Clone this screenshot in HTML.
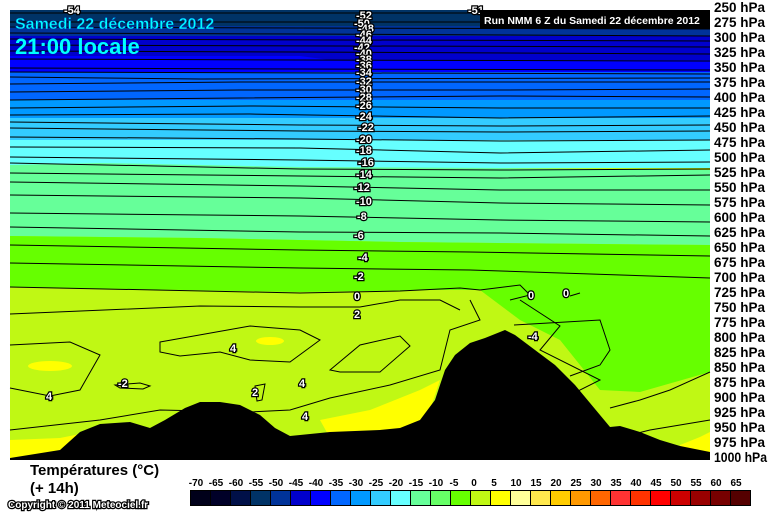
<!DOCTYPE html>
<html><head><meta charset="utf-8"><style>
body{margin:0;width:768px;height:512px;background:#fff;overflow:hidden;font-family:"Liberation Sans",sans-serif}
svg{position:absolute;left:0;top:0}
.lb{font:bold 11px "Liberation Sans",sans-serif;fill:#fff;stroke:#000;stroke-width:2.5px;paint-order:stroke}
</style></head><body>
<svg width="768" height="512" viewBox="0 0 768 512">
<rect x="10" y="10" width="700" height="450" fill="#c0f814"/>
<rect x="10" y="10" width="700" height="16" fill="#003366"/>
<rect x="10" y="26" width="700" height="10" fill="#003399"/>
<path d="M10 36H710V72H10Z" fill="#0000cc"/>
<path d="M10 56H300L330 60H710V73H10Z" fill="#0000ff"/>
<path d="M10 72H710V101H10Z" fill="#0066ff"/>
<path d="M10 100H710V119H10Z" fill="#0099ff"/>
<path d="M10 118H710V141H10Z" fill="#33ccff"/>
<path d="M10 140H710V168H10Z" fill="#66ffff"/>
<path d="M10 165L100 163L300 167L500 168L710 170V245L600 244L400 242L200 238L10 236Z" fill="#66ff99"/>
<path d="M10 236L200 238L400 242L600 244L710 245V372L640 392L600 390L560 340L520 320L480 290L430 290L300 292L10 287Z" fill="#66ff00"/>
<path d="M10 287L150 292L300 296L420 296L470 292L480 310L500 320L480 350L460 360L420 340L400 300Z" fill="#c0f814"/>
<path d="M10 440L60 438L90 432L80 450L60 458H10Z" fill="#ffff00"/>
<path d="M320 420L370 410L420 390L440 380L430 410L410 430L330 438Z" fill="#ffff00"/>
<path d="M680 445L700 437L710 432V455H680Z" fill="#ffff00"/>
<ellipse cx="270" cy="341" rx="14" ry="4" fill="#ffff00"/>
<ellipse cx="50" cy="366" rx="22" ry="5" fill="#ffff00"/>
<g fill="none" stroke="#000" stroke-width="1">
<path d="M10 13H710"/><path d="M10 22H710"/><path d="M10 27L300 28L710 29"/>
<path d="M10 33L300 34L710 36"/><path d="M10 39L710 41"/><path d="M10 45L710 47"/>
<path d="M10 51L300 52L710 54"/><path d="M10 59L300 60L710 61"/><path d="M10 68L300 69L710 70"/>
<path d="M10 72L710 74"/><path d="M10 77L200 79L710 78"/><path d="M10 84L240 82L710 82"/>
<path d="M10 92L240 90L500 90L710 89"/><path d="M10 100L240 98L500 96L710 97"/><path d="M10 108L250 106L500 108L710 108"/>
<path d="M10 115L250 114L500 118L710 116"/><path d="M10 122L300 125L500 126L710 125"/><path d="M10 128L300 131L500 132L710 131"/>
<path d="M10 137L300 139L500 141L710 140"/><path d="M10 147L300 148L500 153L710 150"/><path d="M10 157L300 160L500 163L710 162"/>
<path d="M10 163L300 169L500 170L710 169"/><path d="M10 173L300 176L500 178L710 175"/><path d="M10 182L300 186L500 190L710 190"/>
<path d="M10 195L300 198L500 203L710 205"/><path d="M10 213L300 216L500 220L710 222"/><path d="M10 227L300 232L500 233L710 236"/>
<path d="M10 245L300 250L470 252L710 256"/><path d="M10 263L300 268L470 270L710 278"/><path d="M10 287L300 293L400 291L460 288L480 290L520 285L530 295L510 300"/>
<path d="M10 314L200 306L300 307L360 307L400 300L440 300L460 310"/>
<path d="M10 345L70 342L100 355L80 390L50 396L10 388"/>
<path d="M160 342L250 326L300 330L320 340L290 362L250 360L220 352L180 356L160 352Z"/>
<path d="M330 370L360 345L400 336L410 346L380 372L340 372Z"/>
<path d="M115 385L140 383L150 386L143 389L120 388Z"/>
<path d="M255 386L265 384L262 400L257 401Z"/>
<path d="M10 430L100 420L160 410L250 412L290 410L330 398L390 385L440 370L450 330L480 320L470 300"/>
<path d="M520 300L560 326L540 350L600 380L560 400L590 405"/>
<path d="M514 325L600 320L610 350L600 365L570 376"/>
<path d="M610 440L650 430L710 420"/><path d="M610 408L640 400L670 390L710 372"/>
<path d="M570 296L580 293"/>
</g>
<path d="M10 460V458L60 450L80 432L100 424L130 422L150 428L165 420L185 408L200 402L220 402L240 405L260 415L275 428L290 436L330 432L380 430L400 428L420 420L435 400L445 370L455 355L470 343L485 338L505 330L515 335L535 350L555 365L575 385L590 403L610 427L620 426L640 432L660 440L680 446L710 452V460Z" fill="#000"/>
<g class="lb">
<text x="64" y="14">-54</text><text x="468" y="14">-51</text>
<text x="356" y="19">-52</text><text x="354" y="27">-50</text><text x="358" y="32">-48</text><text x="356" y="38">-46</text><text x="356" y="44">-44</text><text x="354" y="51">-42</text><text x="356" y="57">-40</text><text x="356" y="63">-38</text><text x="356" y="69">-36</text><text x="356" y="76">-34</text><text x="356" y="85">-32</text><text x="356" y="93">-30</text><text x="356" y="101">-28</text><text x="356" y="109">-26</text><text x="356" y="120">-24</text><text x="358" y="131">-22</text><text x="356" y="143">-20</text><text x="356" y="154">-18</text><text x="358" y="166">-16</text><text x="356" y="178">-14</text><text x="354" y="191">-12</text><text x="356" y="205">-10</text><text x="357" y="220">-8</text><text x="354" y="239">-6</text><text x="358" y="261">-4</text><text x="354" y="280">-2</text><text x="354" y="300">0</text><text x="354" y="318">2</text>
<text x="230" y="352">4</text><text x="46" y="400">4</text><text x="118" y="387">-2</text><text x="252" y="396">2</text><text x="299" y="387">4</text><text x="302" y="420">4</text>
<text x="528" y="299">0</text><text x="563" y="297">0</text><text x="528" y="340">-4</text>
</g>
<text x="15" y="29" font-family="Liberation Sans" font-size="16" font-weight="bold" fill="#00ffff" stroke="#0033aa" stroke-width="0.5">Samedi 22 décembre 2012</text>
<text x="15" y="54" font-family="Liberation Sans" font-size="22" font-weight="bold" fill="#00ffff">21:00 locale</text>
<rect x="480" y="10" width="230" height="19" fill="#000"/>
<text x="484" y="24" font-family="Liberation Sans" font-size="10.5" font-weight="bold" fill="#fff">Run NMM 6 Z du Samedi 22 décembre 2012</text>
<g font-family="Liberation Sans" font-size="14" font-weight="bold" fill="#000" lengthAdjust="spacingAndGlyphs">
<text x="714" y="12" textLength="51" lengthAdjust="spacingAndGlyphs">250 hPa</text><text x="714" y="27" textLength="51" lengthAdjust="spacingAndGlyphs">275 hPa</text><text x="714" y="42" textLength="51" lengthAdjust="spacingAndGlyphs">300 hPa</text><text x="714" y="57" textLength="51" lengthAdjust="spacingAndGlyphs">325 hPa</text><text x="714" y="72" textLength="51" lengthAdjust="spacingAndGlyphs">350 hPa</text><text x="714" y="87" textLength="51" lengthAdjust="spacingAndGlyphs">375 hPa</text><text x="714" y="102" textLength="51" lengthAdjust="spacingAndGlyphs">400 hPa</text><text x="714" y="117" textLength="51" lengthAdjust="spacingAndGlyphs">425 hPa</text><text x="714" y="132" textLength="51" lengthAdjust="spacingAndGlyphs">450 hPa</text><text x="714" y="147" textLength="51" lengthAdjust="spacingAndGlyphs">475 hPa</text><text x="714" y="162" textLength="51" lengthAdjust="spacingAndGlyphs">500 hPa</text><text x="714" y="177" textLength="51" lengthAdjust="spacingAndGlyphs">525 hPa</text><text x="714" y="192" textLength="51" lengthAdjust="spacingAndGlyphs">550 hPa</text><text x="714" y="207" textLength="51" lengthAdjust="spacingAndGlyphs">575 hPa</text><text x="714" y="222" textLength="51" lengthAdjust="spacingAndGlyphs">600 hPa</text><text x="714" y="237" textLength="51" lengthAdjust="spacingAndGlyphs">625 hPa</text><text x="714" y="252" textLength="51" lengthAdjust="spacingAndGlyphs">650 hPa</text><text x="714" y="267" textLength="51" lengthAdjust="spacingAndGlyphs">675 hPa</text><text x="714" y="282" textLength="51" lengthAdjust="spacingAndGlyphs">700 hPa</text><text x="714" y="297" textLength="51" lengthAdjust="spacingAndGlyphs">725 hPa</text><text x="714" y="312" textLength="51" lengthAdjust="spacingAndGlyphs">750 hPa</text><text x="714" y="327" textLength="51" lengthAdjust="spacingAndGlyphs">775 hPa</text><text x="714" y="342" textLength="51" lengthAdjust="spacingAndGlyphs">800 hPa</text><text x="714" y="357" textLength="51" lengthAdjust="spacingAndGlyphs">825 hPa</text><text x="714" y="372" textLength="51" lengthAdjust="spacingAndGlyphs">850 hPa</text><text x="714" y="387" textLength="51" lengthAdjust="spacingAndGlyphs">875 hPa</text><text x="714" y="402" textLength="51" lengthAdjust="spacingAndGlyphs">900 hPa</text><text x="714" y="417" textLength="51" lengthAdjust="spacingAndGlyphs">925 hPa</text><text x="714" y="432" textLength="51" lengthAdjust="spacingAndGlyphs">950 hPa</text><text x="714" y="447" textLength="51" lengthAdjust="spacingAndGlyphs">975 hPa</text><text x="714" y="462" textLength="53" lengthAdjust="spacingAndGlyphs">1000 hPa</text>
</g>
<text x="30" y="475" font-family="Liberation Sans" font-size="15" font-weight="bold" fill="#000">Températures (°C)</text>
<text x="30" y="493" font-family="Liberation Sans" font-size="15" font-weight="bold" fill="#000">(+ 14h)</text>
<text x="8" y="508" font-family="Liberation Sans" font-size="10" font-weight="bold" fill="#fff" stroke="#000" stroke-width="2.5" paint-order="stroke">Copyright © 2011 Meteociel.fr</text>
<g font-family="Liberation Sans" font-size="10" font-weight="bold" fill="#000" text-anchor="middle">
<text x="196" y="486">-70</text><text x="216" y="486">-65</text><text x="236" y="486">-60</text><text x="256" y="486">-55</text><text x="276" y="486">-50</text><text x="296" y="486">-45</text><text x="316" y="486">-40</text><text x="336" y="486">-35</text><text x="356" y="486">-30</text><text x="376" y="486">-25</text><text x="396" y="486">-20</text><text x="416" y="486">-15</text><text x="436" y="486">-10</text><text x="454" y="486">-5</text><text x="474" y="486">0</text><text x="494" y="486">5</text><text x="516" y="486">10</text><text x="536" y="486">15</text><text x="556" y="486">20</text><text x="576" y="486">25</text><text x="596" y="486">30</text><text x="616" y="486">35</text><text x="636" y="486">40</text><text x="656" y="486">45</text><text x="676" y="486">50</text><text x="696" y="486">55</text><text x="716" y="486">60</text><text x="736" y="486">65</text>
</g>
<g stroke="#000" stroke-width="1">
<rect x="190.5" y="490.5" width="20" height="15" fill="#00001a"/>
<rect x="210.5" y="490.5" width="20" height="15" fill="#000028"/>
<rect x="230.5" y="490.5" width="20" height="15" fill="#001048"/>
<rect x="250.5" y="490.5" width="20" height="15" fill="#003366"/>
<rect x="270.5" y="490.5" width="20" height="15" fill="#003399"/>
<rect x="290.5" y="490.5" width="20" height="15" fill="#0000cc"/>
<rect x="310.5" y="490.5" width="20" height="15" fill="#0000ff"/>
<rect x="330.5" y="490.5" width="20" height="15" fill="#0066ff"/>
<rect x="350.5" y="490.5" width="20" height="15" fill="#0099ff"/>
<rect x="370.5" y="490.5" width="20" height="15" fill="#33ccff"/>
<rect x="390.5" y="490.5" width="20" height="15" fill="#66ffff"/>
<rect x="410.5" y="490.5" width="20" height="15" fill="#66ff99"/>
<rect x="430.5" y="490.5" width="20" height="15" fill="#66ff66"/>
<rect x="450.5" y="490.5" width="20" height="15" fill="#66ff00"/>
<rect x="470.5" y="490.5" width="20" height="15" fill="#c0f814"/>
<rect x="490.5" y="490.5" width="20" height="15" fill="#ffff00"/>
<rect x="510.5" y="490.5" width="20" height="15" fill="#ffff99"/>
<rect x="530.5" y="490.5" width="20" height="15" fill="#ffe84d"/>
<rect x="550.5" y="490.5" width="20" height="15" fill="#ffcc00"/>
<rect x="570.5" y="490.5" width="20" height="15" fill="#ff9900"/>
<rect x="590.5" y="490.5" width="20" height="15" fill="#ff6600"/>
<rect x="610.5" y="490.5" width="20" height="15" fill="#ff3333"/>
<rect x="630.5" y="490.5" width="20" height="15" fill="#ff3300"/>
<rect x="650.5" y="490.5" width="20" height="15" fill="#ff0000"/>
<rect x="670.5" y="490.5" width="20" height="15" fill="#cc0000"/>
<rect x="690.5" y="490.5" width="20" height="15" fill="#990000"/>
<rect x="710.5" y="490.5" width="20" height="15" fill="#770000"/>
<rect x="730.5" y="490.5" width="20" height="15" fill="#550000"/>
</g>
</svg>
</body></html>
